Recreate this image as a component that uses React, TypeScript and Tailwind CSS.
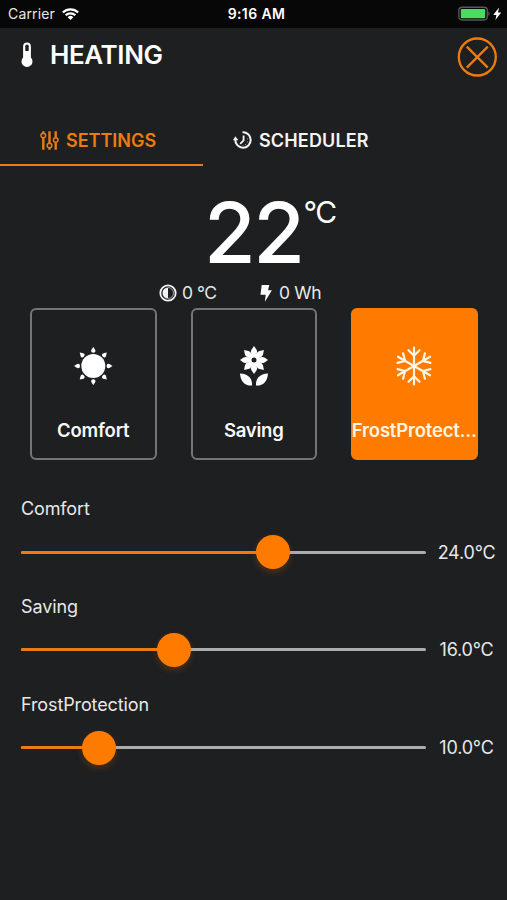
import type { ReactNode } from "react";

type Mode = {
  active?: boolean;
  icon: ReactNode;
  label: string;
};

type Level = {
  label: string;
  position: number;
  value: string;
};

function WifiIcon() {
  return (
    <svg className="h-[12px] w-[17px]" viewBox="0 0 17 12" fill="none" stroke="#fff" strokeWidth="2.3">
      <path d="M0.9 4.5a10.8 10.8 0 0 1 15.2 0" />
      <path d="M3.7 7.3a6.8 6.8 0 0 1 9.6 0" />
      <path d="M8.5 12 5.7 9.2a4 4 0 0 1 5.6 0Z" fill="#fff" stroke="none" />
    </svg>
  );
}

function BatteryIcon() {
  return (
    <svg className="h-[16px] w-[44px]" viewBox="0 0 44 16">
      <rect x="0.9" y="1.2" width="28.4" height="12.8" rx="3.4" fill="none" stroke="#55585a" strokeWidth="1.4" />
      <rect x="2.8" y="3" width="24.4" height="9.2" rx="1.2" fill="#4cd964" />
      <path d="M30.4 5.4c1.7.6 1.7 3.8 0 4.4Z" fill="#55585a" />
      <path d="M41.1 1.4 35.2 8.9h3.2L37.4 14l5.8-7.4h-3.2Z" fill="#fff" />
    </svg>
  );
}

function ThermometerIcon() {
  return (
    <svg className="h-[26px] w-[12px]" viewBox="0 0 12 26">
      <path d="M6 .5a3.9 3.9 0 0 0-3.9 3.9v11.2a5.5 5.5 0 1 0 7.8 0V4.4A3.9 3.9 0 0 0 6 .5Z" fill="#fff" />
      <path d="M4.3 9V4.3a1.7 1.7 0 0 1 3.4 0V9Z" fill="#1e1f21" />
    </svg>
  );
}

function CloseIcon() {
  return (
    <svg className="size-[40px]" viewBox="0 0 40 40" fill="none" stroke="#ee7b10" strokeWidth="2.3">
      <circle cx="20.3" cy="20" r="18.5" />
      <path d="M9.8 9.6 30.8 30.6M30.8 9.6 9.8 30.6" />
    </svg>
  );
}

function SlidersIcon() {
  return (
    <svg className="h-[19px] w-[19px]" viewBox="0 0 19 19" fill="none" stroke="#ee7b10">
      <path d="M3.3.3v2M3.3 7v11.7M9.5.3V12M9.5 17v1.7M15.7.3v6.2M15.7 11.5v7.2" strokeWidth="2.4" />
      <circle cx="3.3" cy="4.5" r="2.3" strokeWidth="1.5" />
      <circle cx="9.5" cy="14.5" r="2.3" strokeWidth="1.5" />
      <circle cx="15.7" cy="9" r="2.3" strokeWidth="1.5" />
    </svg>
  );
}

function ClockIcon() {
  return (
    <svg className="h-[19px] w-[19px]" viewBox="0 0 19 19" fill="none" stroke="#f4f4f4">
      <path d="M2.3 8.5a7.7 7.7 0 1 0 7.2-7.2" strokeWidth="2" />
      <path d="m0 9.3 2.3-4 3.1 4Z" fill="#f4f4f4" stroke="none" />
      <path d="M10.6 4.5v5L7.2 12.9" strokeWidth="1.8" />
      <path d="M14.4 7.5v1M14.4 10.5v1M12.6 13v1M10 14.3v.8" strokeWidth="1" opacity=".6" />
    </svg>
  );
}

function ContrastIcon() {
  return (
    <svg className="size-[18px]" viewBox="0 0 18 18">
      <circle cx="9" cy="9" r="7.7" fill="none" stroke="#f4f4f4" strokeWidth="1.8" />
      <path d="M9 3.5a5.5 5.5 0 0 0 0 11Z" fill="#f4f4f4" />
      <path d="M9 3.5a5.5 5.5 0 0 1 0 11" fill="none" stroke="#f4f4f4" strokeWidth=".6" />
    </svg>
  );
}

function BoltIcon() {
  return (
    <svg className="h-[17px] w-[12px]" viewBox="0 0 12 17">
      <path d="M1.7 0h7.6L8 5.2h3.9L4.9 16.8 5.7 9.8H.5Z" fill="#fff" />
    </svg>
  );
}

const rayAngles = [0, 45, 90, 135, 180, 225, 270, 315];
const armAngles = [0, 60, 120, 180, 240, 300];

function SunIcon() {
  return (
    <svg className="size-[40px]" viewBox="-20.3 -20 40 40" fill="#fff">
      <circle r="12" />
      {rayAngles.map((angle) => (
        <path
          key={angle}
          d="M0-19.2C.8-17.5 2.2-16.3 2.2-15a2.2 1.7 0 0 1-4.4 0c0-1.3 1.4-2.5 2.2-4.2Z"
          transform={`rotate(${angle})`}
        />
      ))}
    </svg>
  );
}

function FlowerIcon() {
  return (
    <svg className="size-[40px]" viewBox="-20 -20 40 40" fill="#fff">
      <g transform="translate(0 -6)">
        {rayAngles.map((angle) => (
          <path
            key={angle}
            d="M0 0C-2.5-5-4-8-2.4-10.5L0-14 2.4-10.5C4-8 2.5-5 0 0Z"
            transform={`rotate(${angle})`}
          />
        ))}
        <circle r="6" />
        <circle r="2.5" fill="#1e1f21" />
      </g>
      <path d="M-14 7.5C-5.5 8-1.5 12.5-2 19.6-9.5 20-13.5 15-14 7.5Z" />
      <path d="M14 7.5C5.5 8 1.5 12.5 2 19.6 9.5 20 13.5 15 14 7.5Z" />
    </svg>
  );
}

function SnowflakeIcon() {
  return (
    <svg
      className="size-[40px]"
      viewBox="-20 -20 40 40"
      fill="none"
      stroke="#fff5e6"
      strokeWidth="2.2"
      strokeLinecap="round"
    >
      {armAngles.map((angle) => (
        <path key={angle} d="M0 0v-18.5M-5.5-15.8 0-10.3 5.5-15.8" transform={`rotate(${angle})`} />
      ))}
    </svg>
  );
}

const modes: Mode[] = [
  { icon: <SunIcon />, label: "Comfort" },
  { icon: <FlowerIcon />, label: "Saving" },
  { active: true, icon: <SnowflakeIcon />, label: "FrostProtect..." },
];

const levels: Level[] = [
  { label: "Comfort", position: 251.5, value: "24.0°C" },
  { label: "Saving", position: 152.5, value: "16.0°C" },
  { label: "FrostProtection", position: 78, value: "10.0°C" },
];

function ModeCard({ active, icon, label }: Mode) {
  return (
    <button
      type="button"
      className={`flex h-[152px] w-[126.5px] flex-col items-center rounded-[6px] border-2 pt-[36px] ${
        active ? "border-[#ff7b00] bg-[#ff7b00] text-[#fff5e6]" : "border-[#747577] text-[#f8f8f8]"
      }`}
    >
      {icon}
      <span className="mt-[30px] text-[18.5px] leading-[28px] font-semibold tracking-[-0.2px] whitespace-nowrap">
        {label}
      </span>
    </button>
  );
}

function LevelSlider({ label, position, value }: Level) {
  return (
    <div className="h-[97.8px] pl-[21px]">
      <div className="text-[18px] leading-[28px] tracking-[-0.12px]">{label}</div>
      <div className="mt-[12px] flex h-[34px] items-center">
        <div className="relative flex h-[34px] w-[405px] items-center">
          <div className="h-[3px] w-full rounded-full bg-[#acacae]">
            <div className="h-full rounded-full bg-[#ee7b10]" style={{ width: position }} />
          </div>
          <div
            className="absolute top-0 size-[34px] -translate-x-1/2 rounded-full bg-[#ff7b00] shadow-[0_3px_7px_rgba(255,123,0,0.22)]"
            style={{ left: position }}
          />
        </div>
        <span className="w-[81px] pt-px text-center text-[18px] leading-[28px] tracking-[-0.2px]">{value}</span>
      </div>
    </div>
  );
}

export default function App() {
  return (
    <div className="flex h-[900px] w-[507px] flex-col overflow-hidden bg-[#1e1f21] font-['Inter',sans-serif] text-[#e8e8e8]">
      <div className="grid h-[28px] grid-cols-3 items-center bg-[#070707] text-[14px]">
        <div className="flex items-center gap-[7px] pb-px pl-[8px]">
          <span className="tracking-[0.15px]">Carrier</span>
          <WifiIcon />
        </div>
        <span className="pb-px pl-[6px] text-center font-semibold tracking-[0.4px] text-white">9:16 AM</span>
        <div className="flex justify-end pr-[5px]">
          <BatteryIcon />
        </div>
      </div>

      <header className="flex h-[88px] items-start justify-between pr-[10px] pl-[21px]">
        <div className="flex items-center gap-[17px] pt-[10px] text-white">
          <ThermometerIcon />
          <h1 className="pt-px text-[26px] leading-[32px] font-semibold tracking-[-0.4px]">HEATING</h1>
        </div>
        <button type="button" className="mt-[9px]">
          <CloseIcon />
        </button>
      </header>

      <nav className="flex h-[50px] text-[18px] font-semibold">
        <div className="flex w-[203px] items-center gap-[7px] border-b-2 border-[#ee7b10] pl-[40px] text-[#ee7b10]">
          <SlidersIcon />
          <span>SETTINGS</span>
        </div>
        <div className="flex items-center gap-[7px] border-b-2 border-transparent pl-[30px] text-[#f4f4f4]">
          <ClockIcon />
          <span className="tracking-[0.15px]">SCHEDULER</span>
        </div>
      </nav>

      <div className="flex h-[112px] items-start pt-[15px] pl-[204px] text-white">
        <span className="text-[84px] leading-[104px] font-medium tracking-[-2.5px]">22</span>
        <span className="mt-[12px] ml-px text-[30px] leading-[38px] tracking-[-1.5px]">°C</span>
      </div>

      <div className="flex h-[30px] items-center pl-[159px] text-[17.5px]">
        <ContrastIcon />
        <span className="ml-[5px] w-[78px] tracking-[-0.5px]">0 °C</span>
        <BoltIcon />
        <span className="ml-[7px] tracking-[-0.3px]">0 Wh</span>
      </div>

      <div className="flex gap-[34px] pl-[30px]">
        {modes.map((mode) => (
          <ModeCard key={mode.label} {...mode} />
        ))}
      </div>

      <div className="mt-[35px]">
        {levels.map((level) => (
          <LevelSlider key={level.label} {...level} />
        ))}
      </div>
    </div>
  );
}
